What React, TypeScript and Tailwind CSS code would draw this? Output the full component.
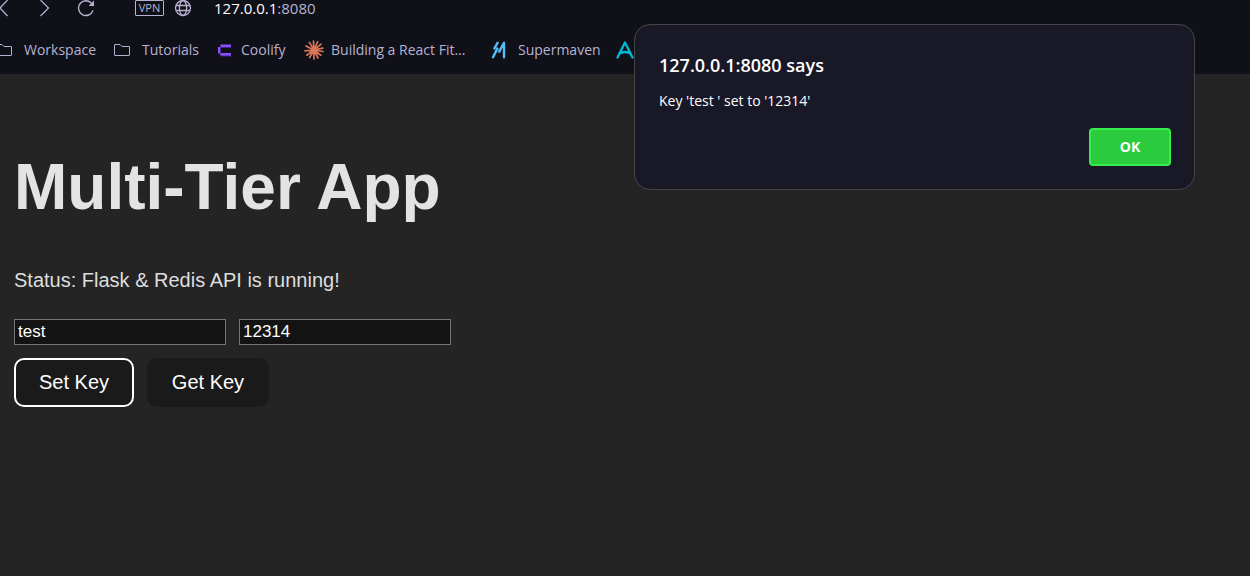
import { useState, type ReactNode } from "react";

function FolderIcon() {
  return (
    <svg className="h-4 w-4 shrink-0" viewBox="0 0 16 16" fill="none" stroke="#b6b2d2" strokeLinejoin="round">
      <path d="M.5 13V3q0-.5.5-.5h5l2 2h7q.5 0 .5.5v8q0 .5-.5.5H1q-.5 0-.5-.5z" />
    </svg>
  );
}

function CoolifyIcon() {
  return (
    <svg className="h-4 w-4 shrink-0" viewBox="0 0 16 16">
      <path d="M5 5h10v1H5zM3 11h2v2H3zM5 13h10v1.5H5zM2 10h2v2H2z" fill="#42208a" />
      <path d="M4.5 2.5H15V5H4.5zM2 5h2.5v6H2zM4.5 11H15v2.5H4.5z" fill="#8b50fb" />
    </svg>
  );
}

function BurstIcon() {
  return (
    <svg className="h-5 w-5 shrink-0" viewBox="0 0 20 20" stroke="#d97757" strokeWidth="1.7" strokeLinecap="round">
      <path d="M10 10 9.5 1.2M10 10 13.6 1.8M10 10 17 4.2M10 10 18.8 8.2M10 10 19 11.5M10 10 16.8 15.2M10 10 14 18M10 10 10 19M10 10 5.6 17.6M10 10 2.8 15.2M10 10 1 10.8M10 10 2 6M10 10 5.4 2.4" />
      <circle cx="10" cy="10" r="2.5" fill="#d97757" stroke="none" />
    </svg>
  );
}

function SupermavenIcon() {
  return (
    <svg className="h-[18px] w-4 shrink-0" viewBox="0 0 16 18" fill="none" stroke="#55bdf5" strokeWidth="2.4" strokeLinecap="round" strokeLinejoin="round">
      <path d="M7.6 1.8 4.4 7.4M7.4 7.6 3 16.2M14 16.2V1.8L9.2 10.6" />
    </svg>
  );
}

function LetterAIcon() {
  return (
    <svg className="h-[18px] w-[18px] shrink-0" viewBox="0 0 18 18" fill="none" stroke="#04b9d6" strokeWidth="2.3" strokeLinecap="round" strokeLinejoin="round">
      <path d="M1.5 16.5 9 1.5l7.5 15M5 12Q9 10 13 12" />
    </svg>
  );
}

function Bookmark({ icon, label, gap }: { icon: ReactNode; label: string; gap: string }) {
  return (
    <a href="#" aria-label={label || "Bookmark"} className={`flex items-center whitespace-nowrap ${gap}`}>
      {icon}
      {label && <span>{label}</span>}
    </a>
  );
}

function BrowserHeader() {
  return (
    <header className="bg-[#101019] pb-[13px] font-['Open_Sans','Noto_Sans',sans-serif] text-[#b6b2d2]">
      <div className="flex h-4 items-center">
        <button aria-label="Back" className="-ml-1">
          <svg className="block h-[18px] w-3" viewBox="0 0 12 18" fill="none" stroke="currentColor" strokeWidth="1.2">
            <path d="M11.5 1 4 9l7.5 8" />
          </svg>
        </button>
        <button aria-label="Forward" className="ml-7">
          <svg className="block h-[18px] w-4" viewBox="0 0 16 18" fill="none" stroke="currentColor" strokeWidth="1.2">
            <path d="M4.5 1 12.5 9l-8 8" />
          </svg>
        </button>
        <button aria-label="Reload" className="ml-[25px]">
          <svg className="block h-[18px] w-[18px]" viewBox="0 0 18 18" fill="none" stroke="currentColor" strokeWidth="1.4">
            <path d="M14.8 4.6A7.4 7.4 0 1 0 16 11.4" />
            <path d="M17 1.6V7h-5.4z" fill="currentColor" stroke="none" />
          </svg>
        </button>
        <button className="ml-10 h-4 w-[29px] shrink-0 rounded-[1px] border border-current text-[11px] leading-[14px]">VPN</button>
        <button aria-label="Site information" className="ml-[10px]">
          <svg className="block h-[18px] w-[18px]" viewBox="0 0 18 18" fill="none" stroke="currentColor" strokeWidth="1.3">
            <circle cx="9" cy="9" r="7.5" />
            <ellipse cx="9" cy="9" rx="3.6" ry="7.5" />
            <path d="M2.3 6.5h13.4M2.3 11.5h13.4" />
          </svg>
        </button>
        <span className="ml-[22px] text-[15px] leading-4">
          <span className="text-white">127.0.0.1</span>:8080
        </span>
      </div>
      <nav aria-label="Bookmarks" className="-ml-1 mt-[23px] grid h-[22px] grid-cols-[118px_102px_88px_186px_126px_24px] items-center text-sm">
        <Bookmark icon={<FolderIcon />} label="Workspace" gap="gap-3" />
        <Bookmark icon={<FolderIcon />} label="Tutorials" gap="gap-3" />
        <Bookmark icon={<CoolifyIcon />} label="Coolify" gap="gap-[9px]" />
        <Bookmark icon={<BurstIcon />} label="Building a React Fit..." gap="gap-[7px]" />
        <Bookmark icon={<SupermavenIcon />} label="Supermaven" gap="gap-3" />
        <Bookmark icon={<LetterAIcon />} label="" gap="gap-3" />
      </nav>
    </header>
  );
}

export default function App() {
  const [keyName, setKeyName] = useState("test ");
  const [value, setValue] = useState("12314");
  const input = "h-[26px] w-[212px] border border-[#767676] bg-[#131313] px-[3px] text-[17px] leading-5 text-white outline-none";
  const button = "h-[49px] rounded-[10px] bg-[#1a1a1a] pb-0.5 text-xl text-white";

  return (
    <div className="relative min-h-screen bg-[#242424]">
      <BrowserHeader />
      <main className="px-[14px] pt-[78px] font-['Liberation_Sans',Arial,sans-serif] text-[#dedede]">
        <h1 className="text-[64px] font-bold leading-[70px] text-[#e3e3e3]">Multi-Tier App</h1>
        <p className="mt-[43px] text-xl leading-[30px]">Status: Flask &amp; Redis API is running!</p>
        <div className="mt-6 flex gap-[13px]">
          <input aria-label="Key" className={input} value={keyName} onChange={(e) => setKeyName(e.target.value)} />
          <input aria-label="Value" className={input} value={value} onChange={(e) => setValue(e.target.value)} />
        </div>
        <div className="mt-[13px] flex gap-[13px]">
          <button className={`${button} w-[120px] border-2 border-white`}>Set Key</button>
          <button className={`${button} w-[122px]`}>Get Key</button>
        </div>
      </main>
      <div
        role="alertdialog"
        aria-labelledby="alert-title"
        aria-describedby="alert-text"
        className="absolute right-[55px] top-6 w-[561px] max-w-full rounded-2xl border border-[#454549] bg-[#191826] pb-[23px] pl-6 pr-[23px] pt-7 font-['Open_Sans','Noto_Sans',sans-serif] text-white"
      >
        <h2 id="alert-title" className="text-lg font-semibold leading-6">127.0.0.1:8080 says</h2>
        <p id="alert-text" className="mt-3 text-sm leading-6">Key 'test ' set to '12314'</p>
        <div className="mt-[15px] flex justify-end">
          <button className="h-[38px] w-[82px] rounded border-2 border-[#35ed4c] bg-[#2acb3d] text-sm font-bold">OK</button>
        </div>
      </div>
    </div>
  );
}
